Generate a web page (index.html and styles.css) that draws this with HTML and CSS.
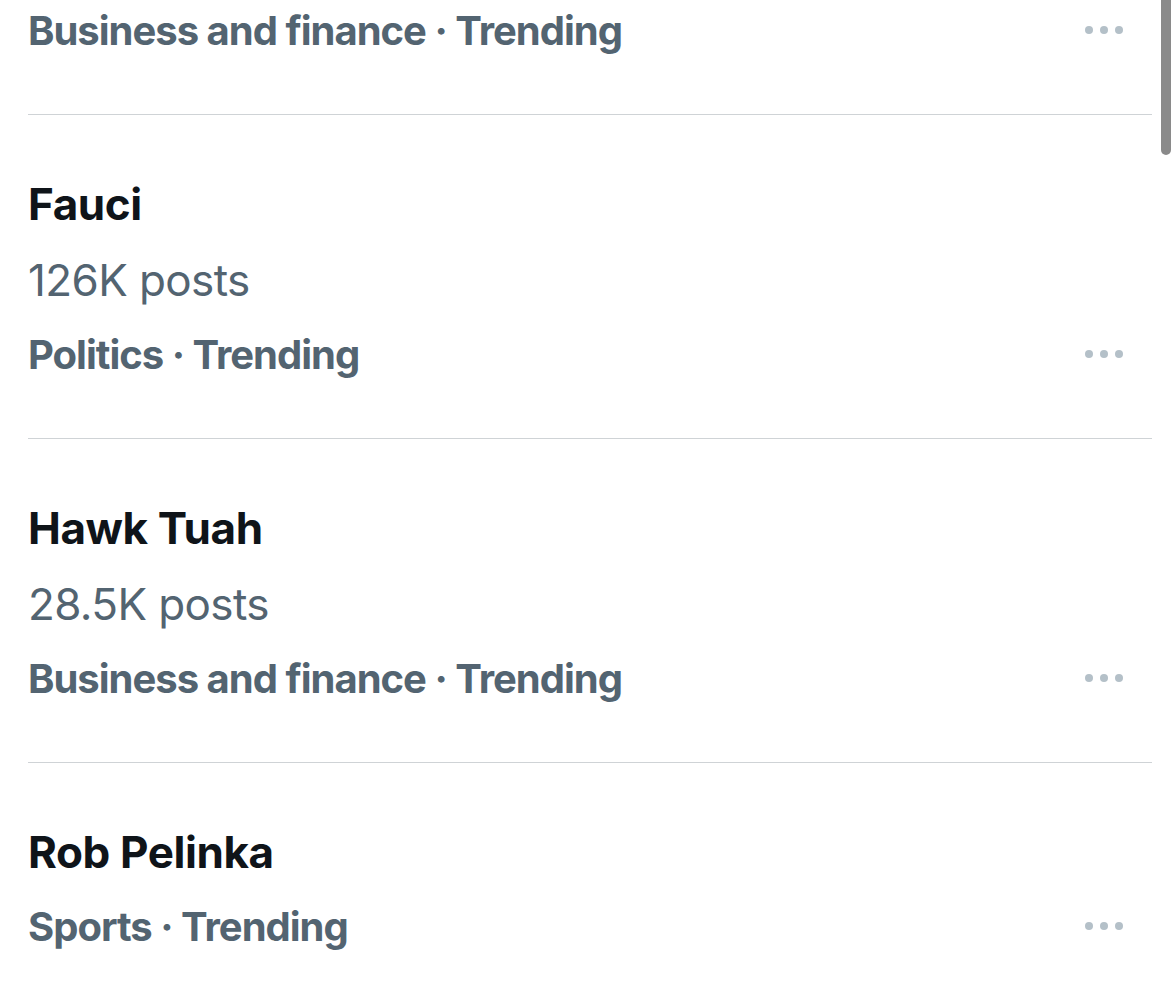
FILE: index.html
```html
<!DOCTYPE html>
<html lang="en">
<head>
  <meta charset="UTF-8" />
  <meta name="viewport" content="width=device-width, initial-scale=1.0"/>
  <title>Trending</title>
  <link rel="stylesheet" href="styles.css">
</head>
<body>
  <!-- scroll indicator -->
  <div class="scrollbar"></div>

  <!-- TRENDS -->
  <ul class="trends">
    <li class="trend">
      <div class="meta">
        <span>Business and finance · Trending</span>
        <span class="more"><i></i><i></i><i></i></span>
      </div>
    </li>
    <li class="trend full">
      <div class="name">Fauci</div>
      <div class="count">126K posts</div>
      <div class="meta">
        <span>Politics · Trending</span>
        <span class="more"><i></i><i></i><i></i></span>
      </div>
    </li>
    <li class="trend full">
      <div class="name">Hawk Tuah</div>
      <div class="count">28.5K posts</div>
      <div class="meta">
        <span>Business and finance · Trending</span>
        <span class="more"><i></i><i></i><i></i></span>
      </div>
    </li>
    <li class="trend full">
      <div class="name">Rob Pelinka</div>
      <div class="meta">
        <span>Sports · Trending</span>
        <span class="more"><i></i><i></i><i></i></span>
      </div>
    </li>
  </ul>
</body>
</html>
```

FILE: styles.css
```css
* {
  box-sizing: border-box;
  margin: 0;
  padding: 0;
  font-family: 'Inter', 'Roboto', sans-serif;
}

body {
  background: #fff;
  overflow: hidden;
}

/*********LISTA***********/
.trends {
  list-style: none;
  padding: 0 22px 0 28px;
  margin-top: -6px; /* lista rolada */
}

.trend {
  border-bottom: 1px solid #cfd3d6;
  padding-bottom: 48px;
}

.trend.full {
  padding-top: 51px;
}

.name {
  font-size: 44px;
  font-weight: 700;
  line-height: 76px;
  letter-spacing: -0.4px;
  color: #0f1419;
}

.count {
  font-size: 44px;
  font-weight: 400;
  line-height: 76px;
  letter-spacing: -0.6px;
  color: #536471;
}

.meta {
  display: flex;
  justify-content: space-between;
  align-items: center;
  height: 72px;
  font-size: 40px;
  font-weight: 700;
  letter-spacing: -1px;
  color: #536471;
}

/* botao de opcoes */
.more {
  display: flex;
  gap: 7px;
  margin-right: 29px;
}

.more i {
  width: 8px;
  height: 8px;
  border-radius: 50%;
  background: #b4c0c8;
}

.scrollbar {
  position: absolute;
  top: 0;
  right: 3px;
  width: 10px;
  height: 155px;
  background: #8a8a8a;
  border-radius: 0 0 5px 5px;
}
```
